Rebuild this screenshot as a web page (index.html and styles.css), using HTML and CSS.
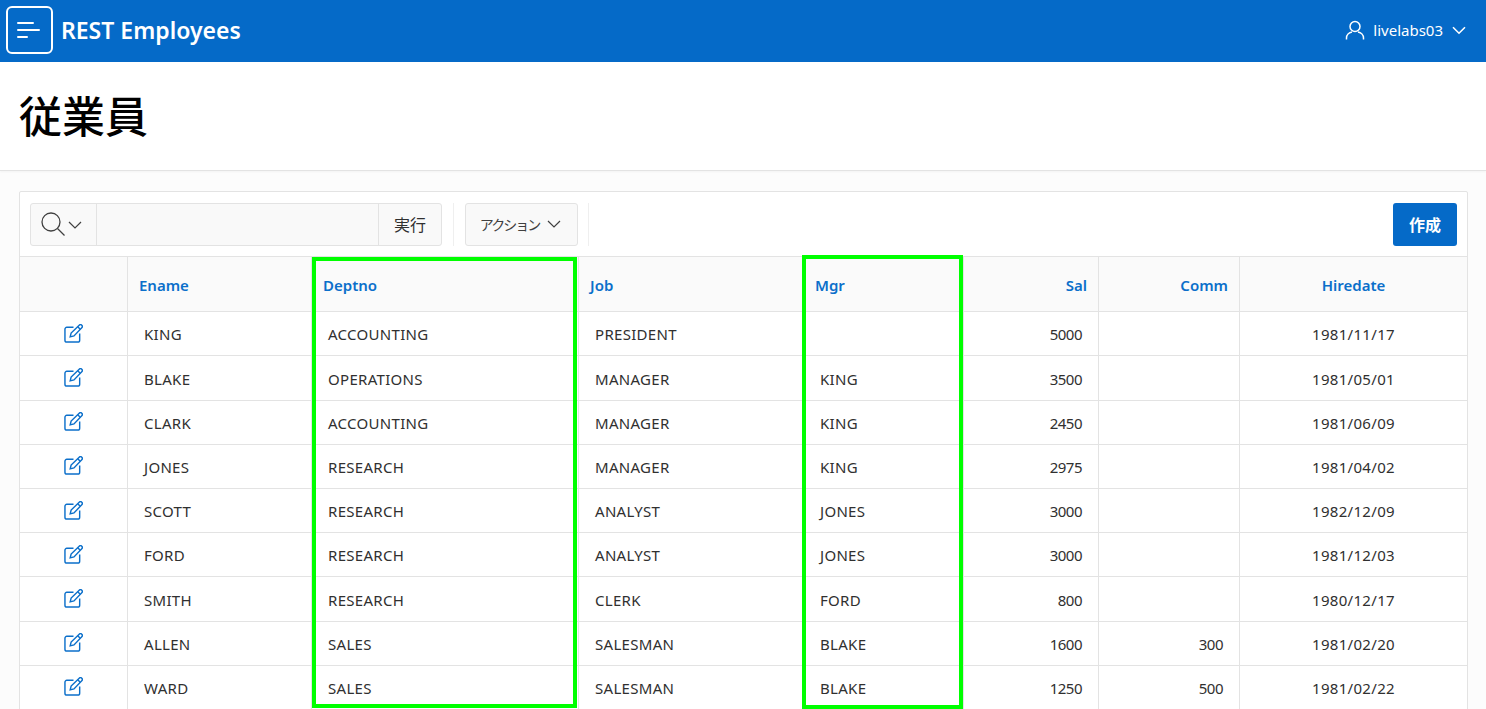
FILE: index.html
```html
<!DOCTYPE html>
<html lang="ja">
<head>
    <meta charset="UTF-8">
    <title>REST Employees</title>
    <link rel="stylesheet" href="styles.css">
</head>
<body>
    <header class="topbar">
        <button class="menu-btn">
            <svg width="24" height="16" viewBox="0 0 24 16"><path d="M1 1h15M1 8h21M1 15h9" stroke="#fff" stroke-width="2" stroke-linecap="round" fill="none"/></svg>
        </button>
        <span class="app-name">REST Employees</span>
        <div class="user-nav">
            <svg width="20" height="20" viewBox="0 0 20 20" fill="none" stroke="#fff" stroke-width="1.5"><circle cx="10" cy="6.5" r="5"/><path d="M1.500 19.500v-1.500c0-3 2.500-5.500 5.500-6M18.500 19.500v-1.500c0-3-2.500-5.500-5.500-6"/></svg>
            <span class="user-name">livelabs03</span>
            <svg width="14" height="9" viewBox="0 0 14 9" fill="none" stroke="#fff" stroke-width="1.6"><path d="M1 1.200l6 6 6-6"/></svg>
        </div>
    </header>

    <div class="title-bar">
        <h1>従業員</h1>
    </div>

    <main class="body-area">
        <div class="report">
            <div class="toolbar">
                <div class="search-group">
                    <div class="search-type">
                        <svg width="24" height="24" viewBox="0 0 24 24" fill="none" stroke="#404040" stroke-width="1.3"><circle cx="10" cy="10" r="9"/><path d="M16.500 16.500l7 7"/></svg>
                        <svg class="small-caret" width="14" height="8" viewBox="0 0 14 8" fill="none" stroke="#404040" stroke-width="1.2"><path d="M1 1l6 6 6-6"/></svg>
                    </div>
                    <input type="text" class="search-input">
                    <button class="go-btn">実行</button>
                </div>
                <span class="divider"></span>
                <button class="actions-btn"><span class="actions-label">アクション</span>
                    <svg width="14" height="8" viewBox="0 0 14 8" fill="none" stroke="#404040" stroke-width="1.2"><path d="M1 1l6 6 6-6"/></svg>
                </button>
                <span class="divider"></span>
                <button class="create-btn">作成</button>
            </div>

            <table class="grid">
                <colgroup>
                    <col class="c-edit"><col class="c-ename"><col class="c-dept"><col class="c-job">
                    <col class="c-mgr"><col class="c-sal"><col class="c-comm"><col class="c-date">
                </colgroup>
                <thead>
                    <tr>
                        <th></th><th>Ename</th><th>Deptno</th><th>Job</th><th>Mgr</th>
                        <th class="right">Sal</th><th class="right">Comm</th><th class="center">Hiredate</th>
                    </tr>
                </thead>
                <tbody id="rows"></tbody>
            </table>
        </div>
    </main>

    <div class="highlight hl-dept"></div>
    <div class="highlight hl-mgr"></div>

    <script>
        const employees = [
            ['KING', 'ACCOUNTING', 'PRESIDENT', '', '5000', '', '1981/11/17'],
            ['BLAKE', 'OPERATIONS', 'MANAGER', 'KING', '3500', '', '1981/05/01'],
            ['CLARK', 'ACCOUNTING', 'MANAGER', 'KING', '2450', '', '1981/06/09'],
            ['JONES', 'RESEARCH', 'MANAGER', 'KING', '2975', '', '1981/04/02'],
            ['SCOTT', 'RESEARCH', 'ANALYST', 'JONES', '3000', '', '1982/12/09'],
            ['FORD', 'RESEARCH', 'ANALYST', 'JONES', '3000', '', '1981/12/03'],
            ['SMITH', 'RESEARCH', 'CLERK', 'FORD', '800', '', '1980/12/17'],
            ['ALLEN', 'SALES', 'SALESMAN', 'BLAKE', '1600', '300', '1981/02/20'],
            ['WARD', 'SALES', 'SALESMAN', 'BLAKE', '1250', '500', '1981/02/22']
        ];
        const editIcon = '<svg width="19" height="19" viewBox="0 0 20 20" fill="none" stroke="#0b6fca" stroke-width="1.5"><path d="M10 3.500H3a2 2 0 0 0-2 2V17a2 2 0 0 0 2 2h11.500a2 2 0 0 0 2-2V10"/><path d="M6.500 13.500l1-4L16 1.300a1.700 1.700 0 0 1 2.700 2.700L10.500 12.500z"/><path d="M14.500 3l2.500 2.500"/></svg>';
        const rows = document.getElementById('rows');
        employees.forEach(emp => {
            const tr = document.createElement('tr');
            tr.innerHTML = '<td class="center edit">' + editIcon + '</td>' +
                '<td>' + emp[0] + '</td><td>' + emp[1] + '</td><td>' + emp[2] + '</td><td>' + emp[3] + '</td>' +
                '<td class="right num">' + emp[4] + '</td><td class="right num">' + emp[5] + '</td><td class="center">' + emp[6] + '</td>';
            rows.appendChild(tr);
        });
    </script>
</body>
</html>
```

FILE: styles.css
```css
html, body {
    height: 709px;
    overflow: hidden;
}
body {
    margin: 0;
    position: relative;
    font-family: "Noto Sans", "Noto Sans CJK JP", sans-serif;
    font-size: 15px;
    color: #303030;
    background-color: #fcfcfc;
}
button {
    font-family: inherit;
}
.topbar {
    height: 62px;
    background-color: #056ac8;
    color: white;
    display: flex;
    align-items: center;
    padding: 0 20px 0 6px;
    box-sizing: border-box;
}
.menu-btn {
    width: 47px;
    height: 48px;
    padding: 0 0 0 9px;
    display: flex;
    align-items: center;
    justify-content: flex-start;
    background: transparent;
    border: 2px solid #fff;
    border-radius: 6px;
    box-sizing: border-box;
    margin-top: -2px;
}
.app-name {
    font-size: 23px;
    font-weight: 600;
    margin: -2px 0 0 8px;
}
.user-nav {
    margin-left: auto;
    display: flex;
    align-items: center;
    gap: 8px;
    margin-top: -2px;
}
.user-name {
    font-size: 15px;
    margin-right: 1px;
}
.title-bar {
    height: 109px;
    background-color: #fff;
    border-bottom: 1px solid #e3e3e3;
    box-shadow: 0 1px 2px rgba(0, 0, 0, 0.04);
    box-sizing: border-box;
    padding: 0 19px;
    display: flex;
    align-items: center;
}
h1 {
    margin: 0;
    font-size: 43px;
    font-weight: 500;
    line-height: 1;
    color: #000;
}
.body-area {
    padding: 20px 18px 0 19px;
}
.report {
    background-color: #fff;
    border: 1px solid #e3e3e3;
    border-radius: 2px;
}
.toolbar {
    height: 64px;
    padding: 0 10px;
    box-sizing: border-box;
    display: flex;
    align-items: center;
}
.search-group {
    display: flex;
    height: 43px;
    width: 412px;
    border: 1px solid #e3e3e3;
    border-radius: 3px;
    box-sizing: border-box;
    background-color: #f9f9f9;
}
.search-type {
    width: 66px;
    display: flex;
    align-items: center;
    padding-left: 10px;
    gap: 3px;
    box-sizing: border-box;
    border-right: 1px solid #e3e3e3;
}
.small-caret {
    margin-top: 2px;
}
.search-input {
    flex-grow: 1;
    min-width: 0;
    border: none;
    background: transparent;
    padding: 0;
}
.go-btn {
    width: 63px;
    border: none;
    border-left: 1px solid #e3e3e3;
    background: transparent;
    font-size: 16px;
    color: #303030;
    padding: 0;
}
.divider {
    width: 1px;
    height: 43px;
    background-color: #efefef;
    margin: 0 11px;
}
.actions-btn {
    width: 113px;
    height: 43px;
    margin-right: -1px;
    border: 1px solid #e3e3e3;
    border-radius: 3px;
    background-color: #f9f9f9;
    color: #404040;
    font-size: 14px;
    padding: 0 2px 0 0;
    display: flex;
    align-items: center;
    justify-content: center;
    gap: 6px;
}
.actions-label {
    letter-spacing: -2px;
    margin-right: 2px;
}
.create-btn {
    margin-left: auto;
    width: 64px;
    height: 43px;
    border: none;
    border-radius: 3px;
    background-color: #056ac8;
    color: white;
    font-size: 16px;
    font-weight: 700;
    padding: 0;
}
.grid {
    width: 100%;
    table-layout: fixed;
    border-collapse: separate;
    border-spacing: 0;
}
.c-edit { width: 108px; }
.c-ename { width: 184px; }
.c-dept { width: 267px; }
.c-job { width: 225px; }
.c-mgr { width: 160px; }
.c-sal { width: 135px; }
.c-comm { width: 141px; }
.grid th {
    height: 56.3px;
    padding: 2px 11px 0;
    box-sizing: border-box;
    background-color: #fafafa;
    border-top: 1px solid #e3e3e3;
    border-bottom: 1px solid #e3e3e3;
    border-right: 1px solid #e3e3e3;
    color: #0b6fca;
    font-size: 15px;
    font-weight: 600;
    text-align: left;
}
.grid td {
    height: 44.2px;
    padding: 1px 16px 0;
    box-sizing: border-box;
    border-bottom: 1px solid #e3e3e3;
    border-right: 1px solid #e3e3e3;
    text-align: left;
    letter-spacing: 0.3px;
}
.grid th:last-child, .grid td:last-child {
    border-right: none;
}
.grid .right {
    text-align: right;
}
.grid .center {
    text-align: center;
}
.grid .num {
    letter-spacing: -0.5px;
}
.edit svg {
    display: block;
    margin: -2px auto 0;
}
.highlight {
    position: absolute;
    border: 4px solid #0f0;
    box-sizing: border-box;
}
.hl-dept {
    left: 312px;
    top: 257px;
    width: 265px;
    height: 451px;
}
.hl-mgr {
    left: 802px;
    top: 255px;
    width: 161px;
    height: 454px;
}
```
